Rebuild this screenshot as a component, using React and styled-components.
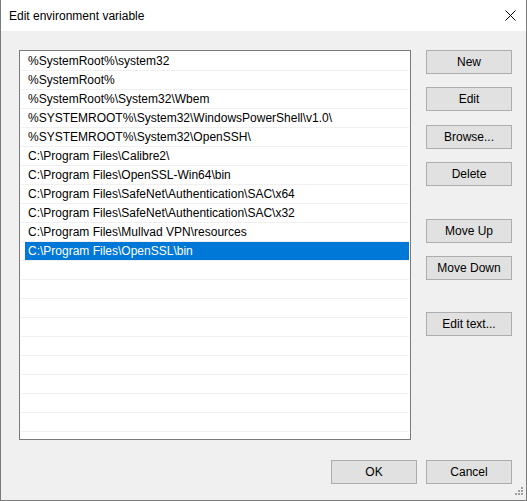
import React from "react";
import styled, { createGlobalStyle } from "styled-components";

const Global = createGlobalStyle`
  html, body { margin: 0; padding: 0; background: #f0f0f0; }
  * { box-sizing: border-box; }
`;

const FONT = `"Segoe UI", "Liberation Sans", "Noto Sans", sans-serif`;

const Window = styled.div`
  width: 527px;
  height: 501px;
  border: 1px solid #7a7a7a;
  border-top: none;
  background: #f0f0f0;
  display: flex;
  flex-direction: column;
  position: relative;
  font-family: ${FONT};
  font-size: 12px;
  color: #000;
  overflow: hidden;
`;

const TitleBar = styled.div`
  height: 31px;
  background: #fff;
  display: flex;
  align-items: center;
  justify-content: space-between;
  padding-left: 8px;
  padding-right: 10px;
  flex-shrink: 0;
`;

const Title = styled.span`
  font-size: 12px;
  line-height: 16px;
  margin-top: 1px;
`;

const CloseBtn = styled.div`
  width: 12px;
  height: 12px;
  display: flex;
  align-items: center;
  justify-content: center;
`;

const Body = styled.div`
  flex: 1;
  display: flex;
  flex-direction: column;
  padding: 19px 14px 0 18px;
`;

const Main = styled.div`
  display: flex;
  gap: 15px;
`;

const List = styled.div`
  width: 392px;
  height: 390px;
  border: 1px solid #7a7a7a;
  background: #fff;
  padding: 1px 1px 0 1px;
  overflow: hidden;
`;

const Row = styled.div`
  height: 19px;
  border-bottom: 1px solid #f0f0f0;
  padding-left: 4px;
  display: flex;
`;

const Cell = styled.div`
  flex: 1;
  height: 18px;
  line-height: 18px;
  padding-left: 3px;
  white-space: nowrap;
  background: ${(p) => (p.$selected ? "#0078d7" : "transparent")};
  color: ${(p) => (p.$selected ? "#fff" : "#000")};
`;

const ButtonColumn = styled.div`
  width: 86px;
  display: flex;
  flex-direction: column;
`;

const Button = styled.div`
  width: 86px;
  height: 24px;
  background: #e1e1e1;
  border: 1px solid #adadad;
  display: flex;
  align-items: center;
  justify-content: center;
  font-size: 12px;
  margin-top: ${(p) => p.$top || 0}px;
  flex-shrink: 0;
`;

const Footer = styled.div`
  display: flex;
  justify-content: flex-end;
  gap: 9px;
  margin-top: 20px;
`;

const Grip = styled.svg`
  position: absolute;
  right: 2px;
  bottom: 2px;
`;

const items = [
  "%SystemRoot%\\system32",
  "%SystemRoot%",
  "%SystemRoot%\\System32\\Wbem",
  "%SYSTEMROOT%\\System32\\WindowsPowerShell\\v1.0\\",
  "%SYSTEMROOT%\\System32\\OpenSSH\\",
  "C:\\Program Files\\Calibre2\\",
  "C:\\Program Files\\OpenSSL-Win64\\bin",
  "C:\\Program Files\\SafeNet\\Authentication\\SAC\\x64",
  "C:\\Program Files\\SafeNet\\Authentication\\SAC\\x32",
  "C:\\Program Files\\Mullvad VPN\\resources",
  "C:\\Program Files\\OpenSSL\\bin",
];

const rows = [...items, ...Array(11).fill("")];

const sideButtons = [
  { label: "New", top: 0 },
  { label: "Edit", top: 13 },
  { label: "Browse...", top: 14 },
  { label: "Delete", top: 13 },
  { label: "Move Up", top: 33 },
  { label: "Move Down", top: 13 },
  { label: "Edit text...", top: 32 },
];

export default function App() {
  return (
    <>
      <Global />
      <Window>
        <TitleBar>
          <Title>Edit environment variable</Title>
          <CloseBtn>
            <svg width="11" height="11" viewBox="0 0 11 11">
              <path d="M0.5 0.5 L10.5 10.5 M10.5 0.5 L0.5 10.5" stroke="#000" strokeWidth="1" />
            </svg>
          </CloseBtn>
        </TitleBar>
        <Body>
          <Main>
            <List>
              {rows.map((t, i) => (
                <Row key={i}>
                  <Cell $selected={i === 10}>{t}</Cell>
                </Row>
              ))}
            </List>
            <ButtonColumn>
              {sideButtons.map((b) => (
                <Button key={b.label} $top={b.top}>
                  {b.label}
                </Button>
              ))}
            </ButtonColumn>
          </Main>
          <Footer>
            <Button>OK</Button>
            <Button>Cancel</Button>
          </Footer>
        </Body>
        <Grip width="11" height="11" viewBox="0 0 11 11">
          <g fill="#a0a0a0">
            <rect x="8" y="0" width="2" height="2" />
            <rect x="5" y="3" width="2" height="2" />
            <rect x="8" y="3" width="2" height="2" />
            <rect x="2" y="6" width="2" height="2" />
            <rect x="5" y="6" width="2" height="2" />
            <rect x="8" y="6" width="2" height="2" />
          </g>
        </Grip>
      </Window>
    </>
  );
}
